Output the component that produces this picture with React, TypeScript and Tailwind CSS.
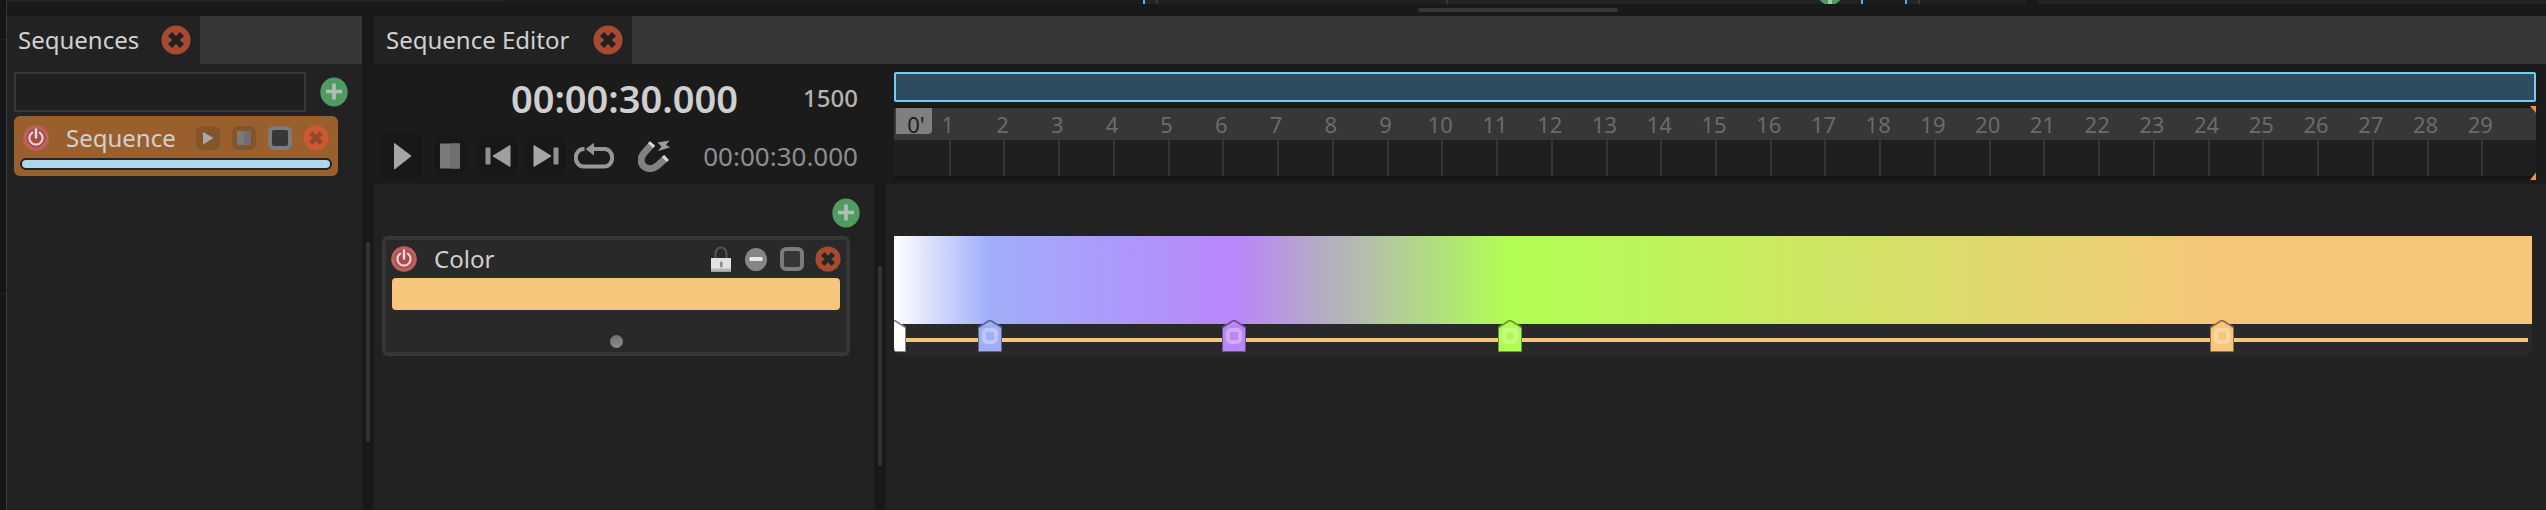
import type { ReactNode } from "react";

const TICKS = Array.from({ length: 29 }, (_, i) => i + 1);

const KEYFRAMES = [
  { at: 0, color: "#ffffff", edge: "#8a8a8a" },
  { at: 5.84, color: "#a0aefa", edge: "#5c6596" },
  { at: 20.76, color: "#b886f9", edge: "#6d4f95" },
  { at: 37.58, color: "#afff52", edge: "#6a9a34" },
  { at: 81.07, color: "#f7c67a", edge: "#8d7146" },
];

function CloseIcon({ size, fill, mark }: { size: number; fill: string; mark: string }) {
  return (
    <svg width={size} height={size} viewBox="0 0 30 30" aria-hidden="true">
      <circle cx="15" cy="15" r="14.5" fill={fill} />
      <path d="M9 9 21 21M21 9 9 21" stroke={mark} strokeWidth="5.4" />
      <path d="M8.6 11.6 11.6 8.6M18.4 8.6 21.4 11.6M8.6 18.4 11.6 21.4M21.4 18.4 18.4 21.4" stroke={mark} strokeWidth="1.6" strokeLinecap="round" />
    </svg>
  );
}

function PlusIcon() {
  return (
    <svg width="28" height="30" viewBox="0 0 28 30" aria-hidden="true">
      <ellipse cx="14" cy="15" rx="13.7" ry="14.6" fill="#4f9c60" />
      <path d="M14 6.5V22.5M6 14.5H22" stroke="#b4bdb4" strokeWidth="3.6" />
    </svg>
  );
}

function PowerIcon() {
  return (
    <svg width="26" height="26" viewBox="0 0 26 26" aria-hidden="true">
      <circle cx="13" cy="13" r="12.8" fill="#bb625e" />
      <circle cx="13" cy="13" r="9.6" fill="#ad4b49" />
      <path d="M9.2 7.6a6.6 6.6 0 1 0 7.6 0" fill="none" stroke="#ecd9d8" strokeWidth="2.2" strokeLinecap="round" />
      <path d="M13 4.4V12.6" stroke="#f1e2e1" strokeWidth="2.4" strokeLinecap="round" />
    </svg>
  );
}

function IconButton({ label, className = "", children }: { label: string; className?: string; children: ReactNode }) {
  return (
    <button type="button" aria-label={label} className={`flex shrink-0 items-center justify-center ${className}`}>
      {children}
    </button>
  );
}

function Check({ label }: { label: string }) {
  return (
    <input
      type="checkbox"
      aria-label={label}
      className="size-6 shrink-0 appearance-none rounded-md border-4 border-[#7c7c7c] bg-[#373737]"
    />
  );
}

function Tab({ title, className }: { title: string; className: string }) {
  return (
    <div className="flex h-12 bg-[#373737]">
      <div className={`flex items-center justify-between bg-[#222222] pr-[9px] ${className}`}>
        <h2 className="whitespace-nowrap text-2xl text-[#d0d0d0]">{title}</h2>
        <IconButton label={`Close ${title}`}>
          <CloseIcon size={30} fill="#a74b30" mark="#222222" />
        </IconButton>
      </div>
    </div>
  );
}

function TopStrip() {
  return (
    <div className="flex h-1 shrink-0 overflow-hidden">
      <div className="h-[2px] w-[497px] bg-[#222222]" />
      <div className="w-[639px] bg-[#1c1c1c]" />
      <div className="w-[2px] bg-[#5ab0e6]" />
      <div className="w-[11px] bg-[#242424]" />
      <div className="w-[2px] bg-[#3a3a3a]" />
      <div className="w-[288px] bg-[#202020]" />
      <div className="w-[2px] bg-[#373737]" />
      <div className="flex w-[413px] flex-col items-end justify-end bg-[#222222] pr-[17px]">
        <div className="shrink-0">
          <svg width="28" height="4" viewBox="0 24 28 4" className="block" aria-hidden="true">
            <ellipse cx="14" cy="14" rx="14" ry="15" fill="#4f9c60" />
            <path d="M14 20V29" stroke="#b4bdb4" strokeWidth="4" />
          </svg>
        </div>
      </div>
      <div className="w-[2px] bg-[#5ab0e6]" />
      <div className="w-[42px] bg-[#1c1c1c]" />
      <div className="w-[2px] bg-[#5ab0e6]" />
      <div className="w-[11px] bg-[#242424]" />
      <div className="w-[2px] bg-[#3a3a3a]" />
      <div className="w-[106px] bg-[#202020]" />
      <div className="w-3" />
      <div className="flex-1 bg-[#222222]" />
    </div>
  );
}

function SequencesPanel() {
  return (
    <section className="flex w-[355px] shrink-0 flex-col bg-[#222222]">
      <Tab title="Sequences" className="w-[193px] pl-[11px]" />
      <div className="flex items-center gap-[14px] pl-[7px] pt-2">
        <input
          type="text"
          aria-label="Sequence name"
          className="h-10 w-[292px] border-2 border-[#373737] bg-[#1f1f1f] px-2 text-2xl text-[#d0d0d0] outline-none"
        />
        <IconButton label="Add sequence">
          <PlusIcon />
        </IconButton>
      </div>
      <div className="ml-[7px] mt-1 flex h-[60px] w-[324px] flex-col justify-between rounded-md bg-[#99602e] px-[6px] pb-[6px] pt-2">
        <div className="flex h-7 items-center">
          <IconButton label="Enable sequence" className="ml-[3px] w-[26px]">
            <PowerIcon />
          </IconButton>
          <span className="ml-[17px] flex-1 text-2xl leading-7 text-[#d0d0d0]">Sequence</span>
          <div className="mr-[11px] flex items-center gap-3">
            <IconButton label="Play sequence" className="size-6 rounded-md bg-[#85552a]">
              <svg width="24" height="24" viewBox="0 0 24 24" aria-hidden="true">
                <path d="M7 6 17.5 12 7 18.5Z" fill="#a9a9a9" />
              </svg>
            </IconButton>
            <IconButton label="Stop sequence" className="size-6 rounded-md bg-[#85552a]">
              <svg width="24" height="24" viewBox="0 0 24 24" aria-hidden="true">
                <rect x="5" y="5" width="14" height="14" rx="1" fill="#7a7a7a" />
                <path d="M12 5h6a1 1 0 0 1 1 1v12a1 1 0 0 1-1 1h-6Z" fill="#6f6f6f" />
              </svg>
            </IconButton>
            <Check label="Loop sequence" />
          </div>
          <IconButton label="Delete sequence" className="mr-[3px] w-[26px]">
            <CloseIcon size={26} fill="#cb5a33" mark="#94492a" />
          </IconButton>
        </div>
        <div className="h-3 rounded-md border-2 border-[#222222] bg-[#b0d8ec]" />
      </div>
    </section>
  );
}

function Splitter({ className }: { className: string }) {
  return (
    <div className={`flex w-3 shrink-0 flex-col items-center bg-[#191919] ${className}`}>
      <div className="h-[200px] w-1 rounded-full bg-[#333333]" />
    </div>
  );
}

function Transport() {
  return (
    <div className="w-[512px] shrink-0 pl-2">
      <div className="flex h-[68px] items-center justify-end pr-7">
        <output className="text-[38px] font-semibold text-[#cfcfcf]">00:00:30.000</output>
        <span className="w-[120px] text-right text-2xl font-medium text-[#b4b4b4]">1500</span>
      </div>
      <div className="flex h-12 items-center">
        <IconButton label="Play" className="h-12 w-10 rounded-lg bg-[#181818]">
          <svg width="40" height="48" viewBox="0 0 40 48" aria-hidden="true">
            <path d="M12.5 11.5 29 24 12.5 37Z" fill="#a6a6a6" stroke="#a6a6a6" strokeLinejoin="round" />
          </svg>
        </IconButton>
        <IconButton label="Stop" className="ml-3 h-10 w-8 rounded-lg bg-[#181818]">
          <svg width="32" height="40" viewBox="0 0 32 40" aria-hidden="true">
            <rect x="6" y="7.5" width="20" height="25" rx="1" fill="#7b7b7b" />
            <path d="M16 7.5h9a1 1 0 0 1 1 1v23a1 1 0 0 1-1 1h-9Z" fill="#707070" />
          </svg>
        </IconButton>
        <IconButton label="Go to start" className="ml-3 h-10 w-10 rounded-lg bg-[#181818]">
          <svg width="40" height="40" viewBox="0 0 40 40" aria-hidden="true">
            <rect x="7.5" y="11.5" width="5" height="17" rx="1" fill="#909090" />
            <path d="M32 9.5V30.5L15 20Z" fill="#a0a0a0" stroke="#a0a0a0" strokeLinejoin="round" />
          </svg>
        </IconButton>
        <IconButton label="Go to end" className="ml-2 h-10 w-10 rounded-lg bg-[#181818]">
          <svg width="40" height="40" viewBox="0 0 40 40" aria-hidden="true">
            <rect x="27.5" y="11.5" width="5" height="17" rx="1" fill="#909090" />
            <path d="M8 9.5V30.5L25 20Z" fill="#a6a6a6" stroke="#a6a6a6" strokeLinejoin="round" />
          </svg>
        </IconButton>
        <IconButton label="Loop" className="ml-2">
          <svg width="40" height="28" viewBox="0 0 40 28" aria-hidden="true">
            <path d="M10.5 7H9.5a7.5 8.5 0 0 0 0 17.5H30.5a7.5 8.5 0 0 0 0-17.5H18" fill="none" stroke="#979797" strokeWidth="4" />
            <path d="M11.5 7 20 .8V13.6Z" fill="#979797" />
          </svg>
        </IconButton>
        <IconButton label="Snap" className="ml-6">
          <svg width="32" height="32" viewBox="0 0 32 32" aria-hidden="true">
            <path d="M14.5 3.5 6.2 12.8C2 17.5 2.500 23 5.500 26 9 29.500 14.500 29.500 19 26L28.500 17.500" fill="none" stroke="#818181" strokeWidth="7" />
            <path d="M14.500 3.500 12.500 5.700M28.500 17.500 26.300 19.500" stroke="#d8d8d8" strokeWidth="7" />
            <path d="M19.500 2.500 31.500 0.500 28 4.800 32 7.500 20 11 23.500 6.500Z" fill="#9b9b9b" />
          </svg>
        </IconButton>
        <span className="w-[188px] text-right text-[26px] text-[#8e8e8e]">00:00:30.000</span>
      </div>
    </div>
  );
}

function Ruler() {
  return (
    <div className="min-w-0 flex-1 pl-2 pr-[10px] pt-2">
      <div className="h-[30px] rounded-xs border-2 border-[#79c9f1] bg-[#2d4d5e]" />
      <div className="relative mt-1 h-[74px] bg-[#161616] pt-[2px]">
        <div className="grid h-8 grid-cols-60 items-center bg-[#373737] text-[22px] leading-8 text-[#6b6b6b]">
          <div className="h-8 pl-[2px]">
            <span className="flex h-[26px] w-9 items-start justify-center rounded-br-sm bg-[#7f7f7f] pl-1 text-[#1b1b1b]">0'</span>
          </div>
          {TICKS.map((n) => (
            <span key={n} className="col-span-2 pr-[2px] text-center">
              {n}
            </span>
          ))}
          <span />
        </div>
        <div className="grid h-9 grid-cols-30 bg-[#1f1f1f]">
          <span />
          {TICKS.map((n) => (
            <span key={n} className="border-l-2 border-[#353535]" />
          ))}
        </div>
        <svg className="absolute right-0 top-0" width="6" height="74" viewBox="0 0 6 74" aria-hidden="true">
          <path d="M0 0H6V7ZM6 66.500V74H0Z" fill="#f0943f" />
        </svg>
      </div>
    </div>
  );
}

function ColorLayer() {
  return (
    <div className="flex w-[500px] shrink-0 flex-col bg-[#222222] pl-2 pr-6">
      <div className="flex h-[52px] justify-end pt-[14px]">
        <IconButton label="Add layer" className="-mr-[10px] h-[30px] w-7">
          <PlusIcon />
        </IconButton>
      </div>
      <div className="h-[120px] rounded-md border-4 border-[#373737] bg-[#292929] px-[6px]">
        <div className="flex h-[38px] items-center">
          <IconButton label="Enable layer" className="-ml-px">
            <PowerIcon />
          </IconButton>
          <span className="ml-[17px] flex-1 text-2xl text-[#d0d0d0]">Color</span>
          <IconButton label="Lock layer">
            <svg width="20" height="26" viewBox="0 0 20 26" aria-hidden="true">
              <path d="M4.500 12V7.500a5.500 6 0 0 1 11 0V12" fill="none" stroke="#555555" strokeWidth="2" />
              <rect x="0" y="12" width="20" height="13.500" fill="#e2e2e2" />
              <path d="M0 22.500H20V25.500H0Z" fill="#b5b5b5" />
              <rect x="9" y="15.500" width="2.500" height="6" rx="1" fill="#8c8c8c" />
            </svg>
          </IconButton>
          <IconButton label="Collapse layer" className="ml-[14px]">
            <svg width="22" height="24" viewBox="0 0 22 24" aria-hidden="true">
              <ellipse cx="11" cy="12.500" rx="11" ry="11.500" fill="#858585" />
              <rect x="4.500" y="10" width="13" height="4" rx="1" fill="#e8e8e8" />
            </svg>
          </IconButton>
          <span className="ml-[13px] mr-[11px] flex">
            <Check label="Select layer" />
          </span>
          <IconButton label="Delete layer" className="-mr-px">
            <CloseIcon size={26} fill="#a74b30" mark="#262626" />
          </IconButton>
        </div>
        <button type="button" aria-label="Layer color" className="block h-8 w-full rounded-sm bg-[#f6c67a]" />
        <div className="flex h-[38px] items-end justify-center">
          <div className="size-[13px] rounded-full bg-linear-to-b from-[#727272] to-[#8c8c8c]" />
        </div>
      </div>
    </div>
  );
}

function Track() {
  return (
    <div className="min-w-0 flex-1 bg-[#222222] pl-2 pr-[14px] pt-[52px]">
      <div className="relative h-[120px] overflow-hidden rounded-b-lg bg-[#292929]">
        <div className="h-[88px] bg-[linear-gradient(to_right,#ffffff_0%,#a0aefa_5.8%,#b886f9_20.9%,#afff52_37.6%,#f6c67a_81%)]" />
        <div className="mr-1 mt-[14px] h-1 bg-[#f6c67a]" />
        {KEYFRAMES.map((k) => (
          <button
            key={k.at}
            type="button"
            aria-label={`Keyframe ${k.color}`}
            className="absolute bottom-1 h-8 w-6 -translate-x-1/2"
            style={{ left: `${k.at}%` }}
          >
            <svg width="24" height="32" viewBox="0 0 24 32" className="block" aria-hidden="true">
              <path d="M.5 7.500 10.500 1Q12 .3 13.500 1L23.500 7.500V31.500H.5Z" fill={k.color} stroke={k.edge} />
              <path d="M.5 7.500 10.500 1Q12 .3 13.500 1L23.500 7.500" fill="none" stroke={k.edge} strokeWidth="1.600" />
              <rect x="6" y="10" width="12" height="12" rx="3" fill="none" stroke="#ffffff" strokeOpacity="0.32" strokeWidth="4" />
            </svg>
          </button>
        ))}
      </div>
    </div>
  );
}

function SequenceEditor() {
  return (
    <section className="flex min-w-0 flex-1 flex-col">
      <Tab title="Sequence Editor" className="w-[258px] pl-3" />
      <div className="flex h-[120px] bg-[#1b1b1b]">
        <Transport />
        <Ruler />
      </div>
      <div className="flex flex-1">
        <ColorLayer />
        <Splitter className="pt-[82px]" />
        <Track />
      </div>
    </section>
  );
}

export default function App() {
  return (
    <main className="flex min-h-screen bg-[#191919] font-['Noto_Sans',sans-serif]">
      <div className="flex w-[7px] shrink-0 flex-col border-r border-[#3a3a3a] bg-[#15161a] pt-[39px]">
        <div className="h-px bg-[#222326]" />
        <div className="mt-[253px] h-px bg-[#222326]" />
      </div>
      <div className="flex min-w-0 flex-1 flex-col border-b border-[#1a1a1d]">
        <TopStrip />
        <div className="flex h-3 shrink-0 items-start pl-[1411px] pt-1">
          <div className="h-1 w-[200px] rounded-full bg-[#373737]" />
        </div>
        <div className="flex flex-1">
          <SequencesPanel />
          <Splitter className="pt-[226px]" />
          <SequenceEditor />
        </div>
      </div>
    </main>
  );
}
